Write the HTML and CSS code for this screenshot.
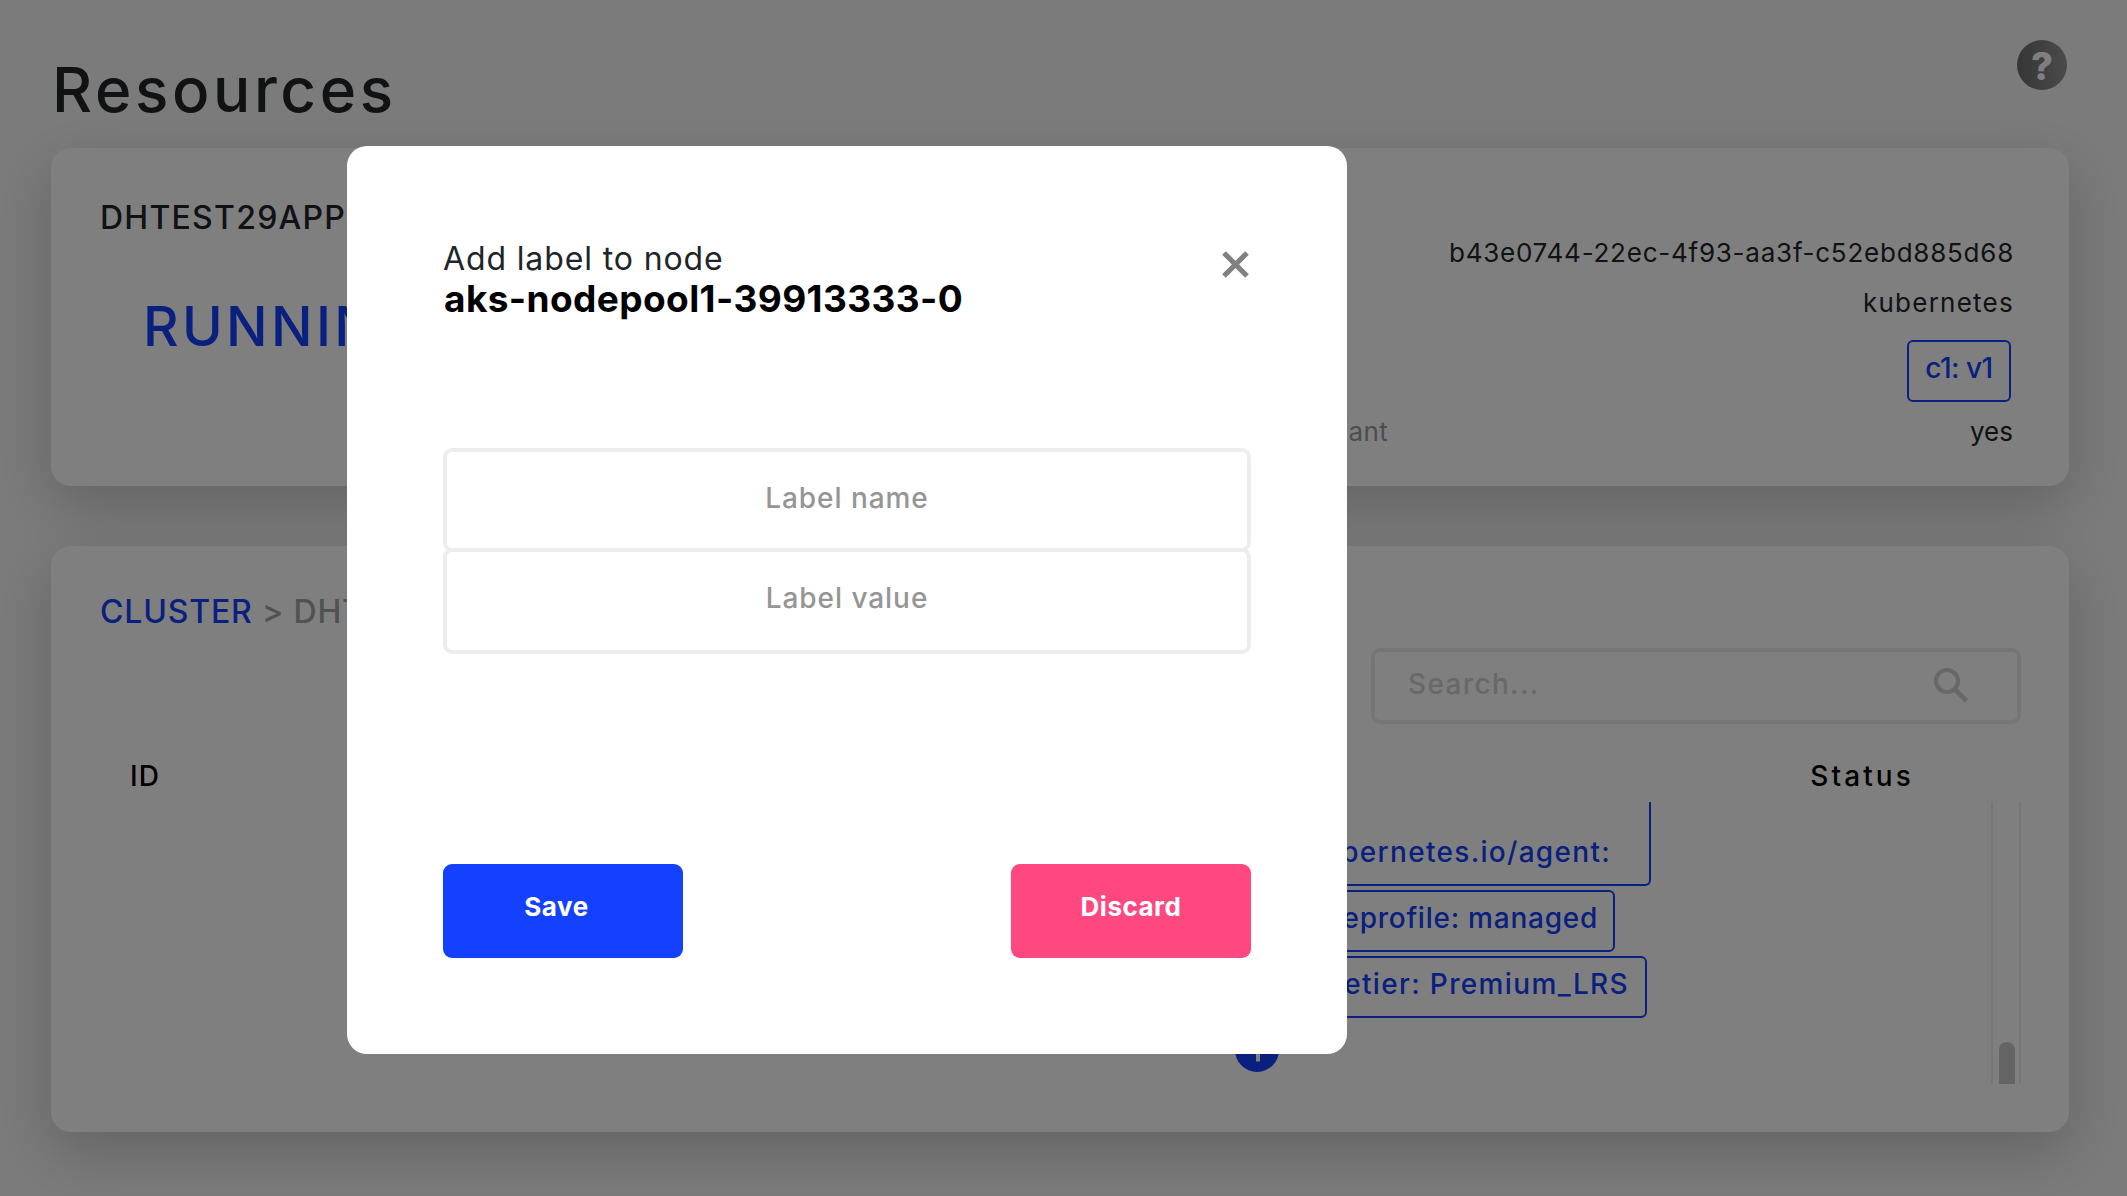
FILE: index.html
```html
<!DOCTYPE html>
<html lang="en">
<head>
<meta charset="utf-8">
<title>Resources</title>
<link rel="stylesheet" href="styles.css">
</head>
<body>
<main class="page">
  <header class="page-header">
    <h1 class="page-title">Resources</h1>
    <button class="help">?</button>
  </header>

  <section class="card summary">
    <div class="summary-main">
      <h2 class="app-name">DHTEST29APPL</h2>
      <div class="state">RUNNING</div>
    </div>
    <div class="facts">
      <div class="fact fact-id">b43e0744-22ec-4f93-aa3f-c52ebd885d68</div>
      <div class="fact fact-type">kubernetes</div>
      <div class="tag fact-tag">c1: v1</div>
      <div class="fact fact-flag"><span class="fact-label">Compliant</span><span>yes</span></div>
    </div>
  </section>

  <section class="card nodes">
    <nav class="crumbs"><a class="crumb-link">CLUSTER</a> &gt; DHTEST</nav>
    <div class="search">
      <span>Search...</span>
      <svg class="search-icon" width="36" height="36" viewBox="0 0 36 36" fill="none" stroke="currentColor" stroke-width="4.2">
        <circle cx="14" cy="13" r="11"/>
        <path d="M22 21.5L33.5 33" stroke-width="4.6"/>
      </svg>
    </div>
    <div class="columns"><span>ID</span><span class="col-status">Status</span></div>
    <div class="rows">
      <div class="labels">
        <div class="tag tag-agent">bernetes.io/agent:</div>
        <div class="tag tag-profile">eprofile: managed</div>
        <div class="tag tag-tier">etier: Premium_LRS</div>
        <svg class="add" width="44" height="44" viewBox="0 0 44 44">
          <circle cx="22" cy="22" r="22" fill="#1341fd"/>
          <path d="M10 22H34M23 10V33.5" stroke="#fff" stroke-width="4"/>
        </svg>
      </div>
      <div class="track"><div class="thumb"></div></div>
    </div>
  </section>
</main>

<div class="overlay">
  <div class="modal">
    <header class="modal-header">
      <div>
        <div class="modal-title">Add label to node</div>
        <div class="modal-node">aks-nodepool1-39913333-0</div>
      </div>
      <svg class="close" width="27" height="27" viewBox="0 0 27 27" stroke="#808080" stroke-width="5.2">
        <path d="M2 2L25 25M25 2L2 25"/>
      </svg>
    </header>
    <div class="field">Label name</div>
    <div class="field field-value">Label value</div>
    <footer class="actions">
      <button class="btn btn-save">Save</button>
      <button class="btn btn-discard">Discard</button>
    </footer>
  </div>
</div>
</body>
</html>
```
FILE: styles.css
```css
* { box-sizing: border-box; }

body {
  margin: 0;
  height: 1196px;
  overflow: hidden;
  background: #f7f7f7;
  color: #212529;
  font-family: Inter, "Liberation Sans", sans-serif;
  white-space: nowrap;
}

h1, h2 { margin: 0; font-weight: 400; }

button { border: 0; padding: 0; font-family: inherit; }

.page { padding: 0 58px 0 51px; }

.page-header {
  display: flex;
  justify-content: space-between;
  height: 148px;
  padding: 40px 2px 0 1px;
}

.page-title {
  margin-top: 10px;
  font-size: 62px;
  font-weight: 550;
  line-height: 80px;
  letter-spacing: 3.6px;
}

.help {
  width: 50px;
  height: 50px;
  border-radius: 50%;
  background: linear-gradient(90deg, #6c6c6c, #969696);
  color: #fff;
  font-size: 38px;
  font-weight: 800;
  line-height: 52px;
}

.card {
  background: #fff;
  border-radius: 20px;
  box-shadow: 0 20px 60px rgba(0, 0, 0, .2);
}

.summary {
  display: flex;
  justify-content: space-between;
  height: 338px;
  padding: 48.5px 56px 0 49px;
}

.app-name { font-size: 32px; font-weight: 450; line-height: 41px; letter-spacing: 1.25px; }

.state {
  margin: 58.5px 0 0 43px;
  color: #1341fd;
  font-size: 55px;
  font-weight: 500;
  line-height: 60px;
  letter-spacing: 3.36px;
}

.facts {
  display: flex;
  flex-direction: column;
  align-items: flex-end;
  padding-top: 36px;
}

.fact { font-size: 26px; line-height: 40px; }
.fact-id { margin-right: -1px; letter-spacing: .76px; }
.fact-type { margin: 10.5px -1px 0 0; letter-spacing: 1.25px; }
.fact-tag { margin: 17px 2px 0 0; width: 104px; font-weight: 500; text-align: center; letter-spacing: -.5px; }
.fact-flag { display: flex; justify-content: space-between; width: 682px; margin: 9.5px 0 0 0; }
.fact-label { width: 57px; direction: rtl; color: #9b9b9b; letter-spacing: .3px; }

.tag {
  height: 62px;
  border: 2px solid #1341fd;
  border-radius: 6px;
  color: #1341fd;
  font-size: 28px;
  line-height: 53px;
}

.nodes { height: 586px; margin-top: 60px; padding: 44.5px 48px 0 49px; }

.crumbs {
  color: #a3a3a3;
  font-size: 32px;
  font-weight: 500;
  line-height: 41px;
  letter-spacing: .82px;
}

.crumb-link { color: #1341fd; }

.search {
  display: flex;
  justify-content: space-between;
  width: 650px;
  height: 76px;
  margin: 16.5px 0 0 auto;
  padding: 0 48px 0 33px;
  border: 4px solid #ededed;
  border-radius: 9px;
  color: #d0d0d0;
  font-size: 28px;
  font-weight: 550;
  line-height: 65px;
  letter-spacing: 1.35px;
}

.search-icon { margin-top: 16px; }

.columns {
  display: flex;
  justify-content: space-between;
  margin-top: 32px;
  padding: 0 107px 0 30px;
  color: #000;
  font-size: 28px;
  font-weight: 500;
  line-height: 40px;
  letter-spacing: 1px;
}

.col-status { letter-spacing: 3.1px; }

.rows {
  display: flex;
  justify-content: space-between;
  height: 282px;
  margin-top: 6px;
  padding-left: 1135px;
  overflow: hidden;
}

.labels { display: flex; flex-direction: column; gap: 4px; }
.labels .tag { text-align: right; font-weight: 450; }
.labels .tag-agent {
  width: 416px;
  height: 84px;
  padding: 24px 38px 0 0;
  border-top: 0;
  border-radius: 0 0 6px 6px;
  letter-spacing: 1.3px;
}
.labels .tag-profile { width: 380px; padding-right: 15px; letter-spacing: .75px; }
.labels .tag-tier { width: 412px; padding-right: 16px; letter-spacing: 1.35px; }

.add { margin-top: 6px; }

.track {
  width: 30px;
  padding: 240px 6px 0;
  border: solid #ededed;
  border-width: 0 2px;
}

.thumb { width: 16px; height: 60px; border-radius: 8px; background: #c8c8c8; }

.overlay {
  position: fixed;
  inset: 0;
  padding: 146px 0 0 347px;
  background: rgba(0, 0, 0, .5);
}

.modal {
  width: 1000px;
  height: 908px;
  padding: 93px 96px 0;
  border-radius: 20px;
  background: #fff;
}

.modal-header { display: flex; justify-content: space-between; height: 209px; }
.modal-title { font-size: 32px; line-height: 40px; letter-spacing: .87px; }
.modal-node { margin-left: 1px; color: #000; font-size: 37px; font-weight: 700; line-height: 39px; letter-spacing: .4px; }
.close { margin: 12px 2px 0 0; }

.field {
  height: 104px;
  border: 4px solid #ededed;
  border-radius: 9px;
  color: #959595;
  font-size: 28px;
  font-weight: 500;
  line-height: 93px;
  letter-spacing: .95px;
  text-align: center;
}

.field-value { height: 106px; margin-top: -4px; }

.actions { display: flex; justify-content: space-between; margin-top: 210px; }

.btn {
  width: 240px;
  height: 94px;
  padding-bottom: 9px;
  border-radius: 9px;
  color: #fff;
  font-size: 26px;
  font-weight: 700;
  letter-spacing: .5px;
}

.btn-save { padding-right: 13px; background: #1341fd; }
.btn-discard { background: #ff487f; }
```
